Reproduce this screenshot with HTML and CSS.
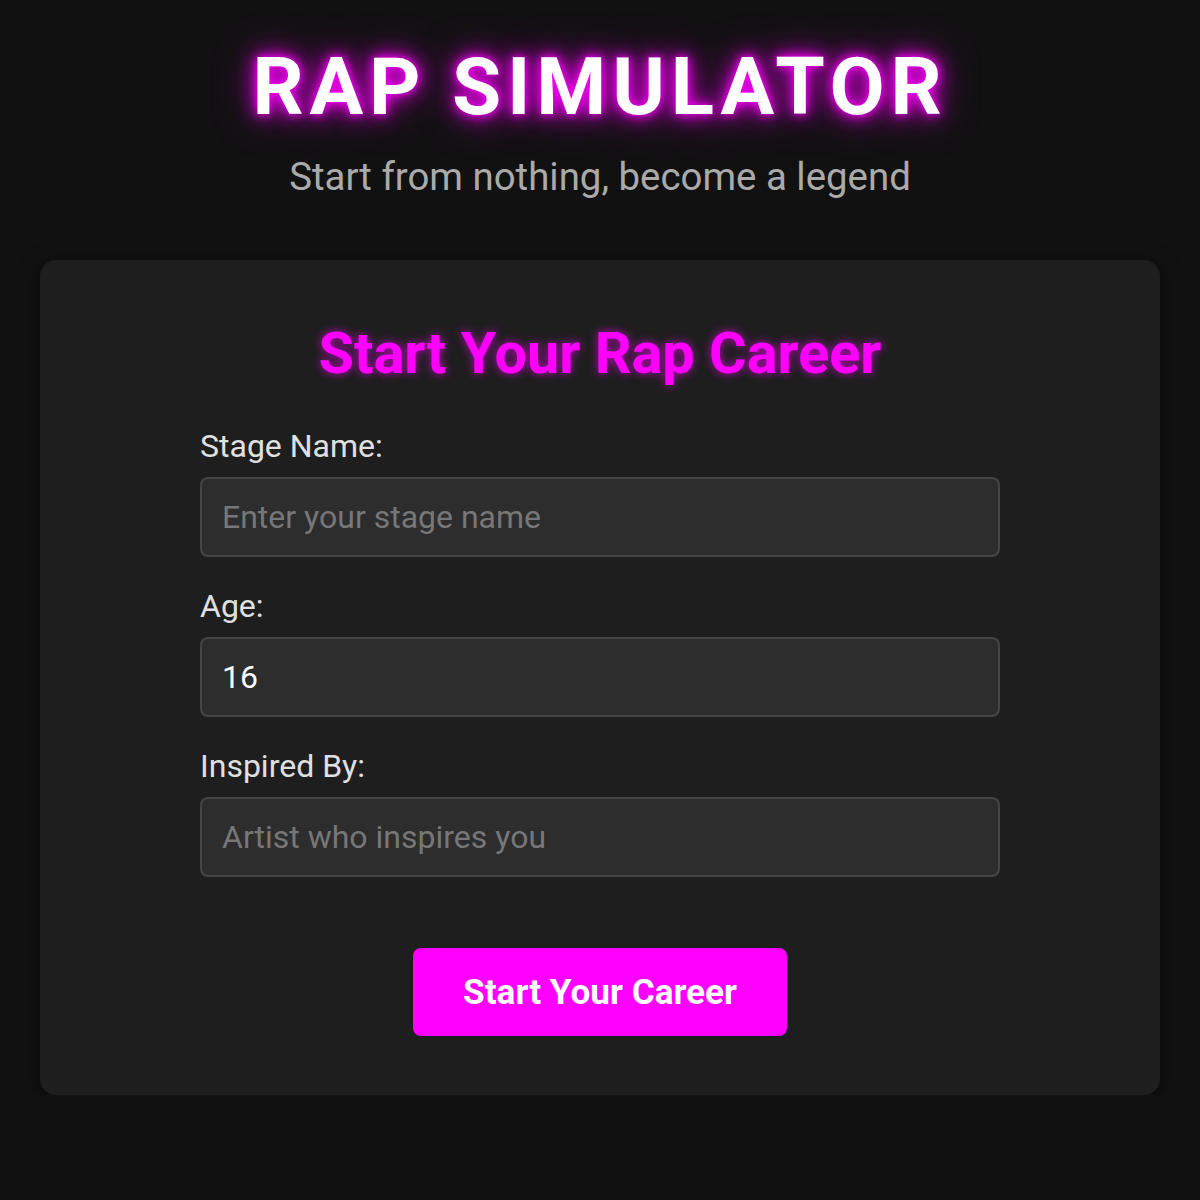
FILE: index.html
```html
<!DOCTYPE html>
<html lang="en">
<head>
<meta charset="utf-8">
<title>Rap Simulator</title>
<link rel="stylesheet" href="styles.css">
</head>
<body>
<header class="header">
  <h1 class="title">RAP SIMULATOR</h1>
  <p class="subtitle">Start from nothing, become a legend</p>
</header>
<main class="card">
  <h2 class="card-title">Start Your Rap Career</h2>
  <form class="form">
    <div class="field">
      <label class="label" for="name">Stage Name:</label>
      <input class="input" id="name" type="text" placeholder="Enter your stage name">
    </div>
    <div class="field">
      <label class="label" for="age">Age:</label>
      <input class="input" id="age" type="text" value="16">
    </div>
    <div class="field">
      <label class="label" for="insp">Inspired By:</label>
      <input class="input" id="insp" type="text" placeholder="Artist who inspires you">
    </div>
    <div class="actions">
      <button class="btn" type="button">Start Your Career</button>
    </div>
  </form>
</main>
</body>
</html>
```
FILE: styles.css
```css
* { box-sizing: border-box; }
html, body { margin: 0; padding: 0; }
body {
  background: #111111;
  color: #e0e0e0;
  font-family: Roboto, "Liberation Sans", sans-serif;
  padding: 40px 40px 0;
}
.header { text-align: center; }
.title {
  margin: 0;
  font-size: 80px;
  font-weight: 700;
  line-height: normal;
  letter-spacing: 5.8px;
  color: #ffffff;
  text-shadow: 0 0 10px #ff00ff, 0 0 20px #ff00ff, 0 0 40px #b000b0;
}
.subtitle {
  margin: 19.6px 0 0;
  font-size: 38.4px;
  line-height: normal;
  color: #aaaaaa;
}
.card {
  margin-top: 61.6px;
  background: #1e1e1e;
  border-radius: 16px;
  box-shadow: 0 4px 20px rgba(0, 0, 0, 0.5);
  padding: 59.6px 40px 59px;
}
.card-title {
  margin: 0;
  text-align: center;
  font-size: 57.6px;
  font-weight: 700;
  line-height: normal;
  color: #ff00ff;
  text-shadow: 0 0 10px rgba(255, 0, 255, 0.7);
}
.form {
  max-width: 800px;
  margin: 40px auto 0;
  display: flex;
  flex-direction: column;
  gap: 30px;
}
.field { display: flex; flex-direction: column; gap: 12px; }
.label {
  font-size: 32px;
  line-height: normal;
  color: #e0e0e0;
}
.input {
  height: 80px;
  width: 100%;
  background: #2d2d2d;
  border: 2px solid #444444;
  border-radius: 8px;
  padding: 0 20px;
  font-family: inherit;
  font-size: 32px;
  color: #ffffff;
  outline: none;
}
.input::placeholder { color: #777777; }
.actions { display: flex; justify-content: center; margin-top: 41px; }
.btn {
  width: 374px;
  height: 88px;
  padding: 0;
  background: #ff00ff;
  border: none;
  border-radius: 8px;
  color: #ffffff;
  font-family: inherit;
  font-size: 35.2px;
  font-weight: 700;
}
```
